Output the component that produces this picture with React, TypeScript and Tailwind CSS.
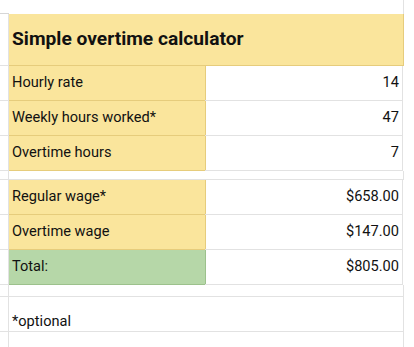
import React from 'react'

const rowsTop = [
  { label: 'Hourly rate', value: '14' },
  { label: 'Weekly hours worked*', value: '47' },
  { label: 'Overtime hours', value: '7' },
]

const rowsBottom = [
  { label: 'Regular wage*', value: '$658.00', total: false },
  { label: 'Overtime wage', value: '$147.00', total: false },
  { label: 'Total:', value: '$805.00', total: true },
]

function Row({ label, value, total }: { label: string; value: string; total?: boolean }) {
  return (
    <div className="flex h-[35px]">
      <div className="w-[9px] border-r border-b border-[#e2e2e2]" />
      <div
        className={`w-[197px] flex items-center pl-[3px] border-b border-r -mr-px ${
          total ? 'bg-[#b6d7a8] border-[#9cc18c]' : 'bg-[#fae59c] border-[#e6cc7c]'
        }`}
      >
        {label}
      </div>
      <div className="w-[198px] flex items-center justify-end pr-[3px] border-b border-r border-[#e2e2e2]">
        {value}
      </div>
    </div>
  )
}

export default function App() {
  return (
    <div
      className="w-[414px] h-[347px] bg-white text-[14.6px] text-[#111] overflow-hidden"
      style={{ fontFamily: 'Roboto, "Liberation Sans", sans-serif' }}
    >
      {/* top margin strip */}
      <div className="flex h-[14px]">
        <div className="w-[9px] border-b border-[#d6d6d6]" />
        <div className="w-[395px] border-r border-[#e2e2e2]" />
      </div>

      {/* title */}
      <div className="flex h-[52px]">
        <div className="w-[9px] border-r border-b border-[#e2e2e2]" />
        <div className="w-[395px] flex items-center pl-[3px] bg-[#fae59c] border-b border-r border-[#e6cc7c] text-[19.2px] font-bold">
          Simple overtime calculator
        </div>
      </div>

      {rowsTop.map((r) => (
        <Row key={r.label} label={r.label} value={r.value} />
      ))}

      {/* spacer row */}
      <div className="flex h-[9px]">
        <div className="w-[9px] border-r border-b border-[#e2e2e2]" />
        <div className="w-[395px] border-r border-b border-[#e2e2e2]" />
      </div>

      {rowsBottom.map((r) => (
        <Row key={r.label} label={r.label} value={r.value} total={r.total} />
      ))}

      <div className="flex h-[12px]">
        <div className="w-[9px] border-r border-b border-[#e2e2e2]" />
        <div className="w-[395px] border-r border-b border-[#e2e2e2]" />
      </div>

      {/* footnote, bottom-aligned like the sheet cell */}
      <div className="flex h-[35px]">
        <div className="w-[9px] border-r border-b border-[#e2e2e2]" />
        <div className="w-[395px] flex items-end pl-[3px] pb-[1px] leading-[17px] border-r border-b border-[#e2e2e2]">
          *optional
        </div>
      </div>

      <div className="flex h-[40px]">
        <div className="w-[9px] border-r border-[#e2e2e2]" />
        <div className="w-[395px] border-r border-[#e2e2e2]" />
      </div>
    </div>
  )
}
